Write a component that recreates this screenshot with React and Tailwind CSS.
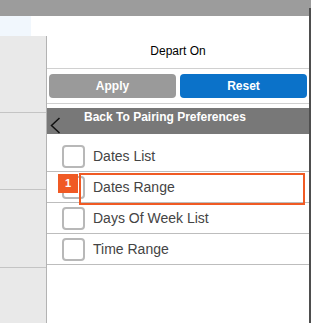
export default function App() {
  const items = ["Dates List", "Dates Range", "Days Of Week List", "Time Range"];
  return (
    <div
      className="w-[311px] h-[323px] bg-white flex overflow-hidden relative"
      style={{ fontFamily: '"Liberation Sans", Arial, sans-serif' }}
    >
      <div className="w-[309px] flex flex-col">
        <div className="h-[16px] bg-[#9c9c9c] shrink-0" />
        <div className="flex flex-1">
          {/* left column */}
          <div className="w-[47px] flex flex-col shrink-0">
            <div className="h-[20px] w-[31px] bg-[#f1f7fd]" />
            <div className="flex-1 bg-[#e9e9e9] border-r border-[#b3b3b3] flex flex-col">
              <div className="h-[77px] border-b border-[#c4c4c4]" />
              <div className="h-[77px] border-b border-[#c4c4c4]" />
              <div className="h-[78px] border-b border-[#c4c4c4]" />
            </div>
          </div>
          {/* right column */}
          <div className="flex-1 flex flex-col">
            <div className="h-[53px] border-b border-[#d0d0d0] flex items-end justify-center pb-[9px] text-[12px] leading-[16px] text-black">
              Depart On
            </div>
            <div className="flex gap-[4px] px-[2px] pt-[5px] pb-[5px] border-b border-[#d0d0d0]">
              <button className="flex-1 h-[24px] rounded-[4px] bg-[#9a9a9a] text-white font-bold text-[12px]">
                Apply
              </button>
              <button className="flex-1 h-[24px] rounded-[4px] bg-[#0b72c9] text-white font-bold text-[12px]">
                Reset
              </button>
            </div>
            <div className="mt-[4px] h-[26px] bg-[#787878] flex items-start relative">
              <svg
                width="11"
                height="18"
                viewBox="0 0 11 18"
                className="absolute left-[3px] top-[9px]"
              >
                <path d="M9.5 1 L1.5 8.5 L9.5 16" stroke="#111" strokeWidth="1.5" fill="none" />
              </svg>
              <span className="pl-[37px] pt-[2px] text-white font-bold text-[12px] leading-[14px]">
                Back To Pairing Preferences
              </span>
            </div>
            <div className="pt-[7px] flex flex-col">
              {items.map((t) => (
                <div
                  key={t}
                  className="h-[31px] border-b border-[#bdbdbd] flex items-center pl-[15px]"
                >
                  <div className="w-[23px] h-[23px] rounded-[4px] border-2 border-[#b8b8b8] bg-white shrink-0" />
                  <span className="ml-[8px] text-[14px] text-[#444]">{t}</span>
                </div>
              ))}
            </div>
          </div>
        </div>
      </div>
      <div className="w-[2px] flex flex-col">
        <div className="h-[8px] bg-[#9c9c9c]" />
        <div className="flex-1 bg-[#4e4e4e]" />
      </div>
      {/* annotation overlay */}
      <div className="absolute left-[79px] top-[173px] w-[226px] h-[32px] border-2 border-[#f05a24]" />
      <div className="absolute left-[58px] top-[174px] w-[20px] h-[19px] bg-[#f05a24] text-white font-bold text-[11px] flex items-center justify-center">
        1
      </div>
    </div>
  );
}
